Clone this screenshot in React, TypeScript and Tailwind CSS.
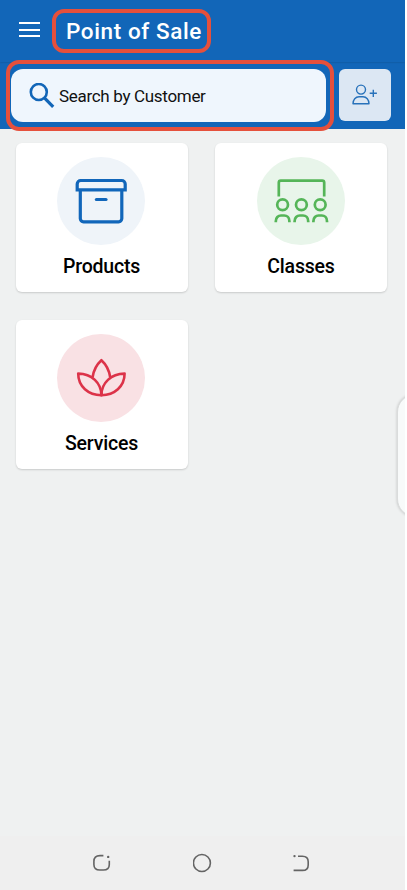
import React from 'react'

const ProductsIcon = () => (
  <svg viewBox="0 0 88 88" fill="none" stroke="currentColor" strokeWidth="3.2" className="h-full w-full">
    <path d="M20.2 32.8V27a3.5 3.5 0 0 1 3.5-3.5h41a3.5 3.5 0 0 1 3.5 3.5v5.8z" />
    <path d="M23.3 33v28.6a3.2 3.2 0 0 0 3.2 3.2h35.1a3.2 3.2 0 0 0 3.2-3.2V33" />
    <path d="M39.4 42.5h9.6" strokeLinecap="round" />
  </svg>
)

const attendees = [25.6, 44.4, 63.2]

const ClassesIcon = () => (
  <svg
    viewBox="0 0 88 88"
    fill="none"
    stroke="currentColor"
    strokeWidth="2.7"
    className="h-full w-full"
  >
    <path d="M21.8 39.6V25.6a2 2 0 0 1 2-2h41.4a2 2 0 0 1 2 2v14" />
    {attendees.map((x) => (
      <g key={x} transform={`translate(${x} 0)`}>
        <circle cx="0" cy="47.8" r="5.4" />
        <path d="M-6.8 65.2v-1c0-3.7 2.4-5.7 5.2-5.7h3.2c2.8 0 5.2 2 5.2 5.7v1" />
      </g>
    ))}
  </svg>
)

const ServicesIcon = () => (
  <svg
    viewBox="0 0 88 88"
    fill="none"
    stroke="currentColor"
    strokeWidth="2.6"
    strokeLinejoin="round"
    className="h-full w-full"
  >
    <path d="M35.6 43.2c.9-6.3 3.8-12.5 8.8-17 5 4.5 7.9 10.7 8.8 17" />
    <path d="M44.4 61.2c0-12.2-9.7-21.6-23.2-21.6 0 13 10.2 21.6 23.2 21.6z" />
    <path d="M44.4 61.2c0-12.2 9.7-21.6 23.2-21.6 0 13-10.2 21.6-23.2 21.6z" />
  </svg>
)

const categories = [
  { label: 'Products', icon: ProductsIcon, color: 'bg-[#eff4f9] text-[#1166ba]' },
  { label: 'Classes', icon: ClassesIcon, color: 'bg-[#e8f5ea] text-[#55b558]' },
  { label: 'Services', icon: ServicesIcon, color: 'bg-[#f9e1e4] text-[#dc3349]' },
]

const Header = () => (
  <header className="relative flex h-[62px] items-center bg-[#1266b8] pl-[19px] shadow-[0_0_2px_rgba(0,0,0,0.25)]">
    <button aria-label="Open menu" className="-mt-[3px] flex h-[15px] w-[21px] flex-col justify-between">
      <span className="h-0.5 w-full bg-white" />
      <span className="h-0.5 w-full bg-white" />
      <span className="h-0.5 w-full bg-white" />
    </button>
    <div className="relative ml-[26px]">
      <h1 className="text-[22.5px] leading-7 font-medium tracking-[0.6px] whitespace-nowrap text-white">
        Point of Sale
      </h1>
      <div className="pointer-events-none absolute -top-2 -left-3.5 h-11 w-[159px] rounded-xl border-4 border-[#e5503c]" />
    </div>
  </header>
)

const SearchBar = () => (
  <div className="flex h-[67px] items-start bg-[#1266b8] pt-[7px] pl-[11px]">
    <div className="relative">
      <label className="flex h-[53px] w-[315px] items-center rounded-xl bg-[#eff6fd] pl-[18px]">
        <svg viewBox="0 0 26 26" fill="none" stroke="#1266b8" className="h-[26px] w-[26px]">
          <circle cx="9.8" cy="9" r="8" strokeWidth="2.6" />
          <path d="M15.4 14.8l8.8 9" strokeWidth="3.2" />
        </svg>
        <span className="mt-[3px] ml-1 text-[17px] tracking-[-0.31px] text-[#111]">Search by Customer</span>
      </label>
      <div className="pointer-events-none absolute -top-[9px] -left-[5px] h-[71px] w-[328px] rounded-[13px] border-4 border-[#e5503c]" />
    </div>
    <button
      aria-label="Add customer"
      className="ml-[13px] flex h-[52px] w-[52px] items-center justify-center rounded-md bg-[#dce7f3]"
    >
      <svg viewBox="0 0 26 22" fill="none" stroke="#2872ba" strokeWidth="1.4" className="h-[22px] w-[26px]">
        <circle cx="9" cy="5.6" r="4.5" />
        <path d="M1 19.8c0-4 2.6-7 6-7h4c3.4 0 6 3 6 7z" strokeLinejoin="round" />
        <path d="M17.7 9.3h7.2M21.3 5.7v7.2" />
      </svg>
    </button>
  </div>
)

const NavigationBar = () => (
  <nav className="flex h-[54px] items-center justify-between bg-[#efefef] px-[92px] text-[#646464]">
    <svg viewBox="0 0 20 20" fill="none" stroke="currentColor" strokeWidth="1.6" className="h-5 w-5">
      <path d="M11.4 2.6H8Q1.9 2.6 1.9 8.6v2.8Q1.9 17 7.9 17h3.4q6 0 6-5.6V7.8" />
      <circle cx="16.2" cy="3.9" r="1.2" fill="currentColor" stroke="none" />
    </svg>
    <svg viewBox="0 0 20 20" fill="none" stroke="currentColor" strokeWidth="1.6" className="h-5 w-5">
      <circle cx="8.9" cy="10" r="8.5" />
    </svg>
    <svg viewBox="0 0 20 20" fill="none" stroke="currentColor" strokeWidth="1.6" className="h-5 w-5">
      <path d="M5 3.2h4.4q5.8 0 5.8 5.5v3.2q0 5.500-5.800 5.500H.6" />
      <circle cx="1.5" cy="3.1" r="1.2" fill="currentColor" stroke="none" />
    </svg>
  </nav>
)

const App = () => {
  return (
    <div className="h-[890px] w-[407px] bg-white font-['Roboto',sans-serif]">
      <div className="relative flex h-full w-[405px] flex-col overflow-hidden bg-[#eff1f1]">
        <Header />
        <SearchBar />
        <main className="grid flex-1 grid-cols-[172px_172px] content-start gap-x-[27.5px] gap-y-7 pt-3.5 pl-[15.5px]">
          {categories.map(({ label, icon: Icon, color }) => (
            <button
              key={label}
              className="flex h-[149px] flex-col items-center rounded-md bg-white pt-[13.5px] shadow-[0_1px_2px_rgba(0,0,0,0.16)]"
            >
              <span className={`-ml-px h-[88px] w-[88px] rounded-full ${color}`}>
                <Icon />
              </span>
              <span className="mt-2.5 text-[19.5px] leading-6 font-medium tracking-[-0.2px] text-black">
                {label}
              </span>
            </button>
          ))}
        </main>
        <NavigationBar />

        {/* edge panel handle */}
        <div className="absolute top-[394px] left-[397px] h-[123px] w-10 rounded-[18px] border border-[#dadcdc] bg-[#f8fafa] shadow-[0_0_3px_rgba(0,0,0,0.2)]" />
      </div>
    </div>
  )
}

export default App
